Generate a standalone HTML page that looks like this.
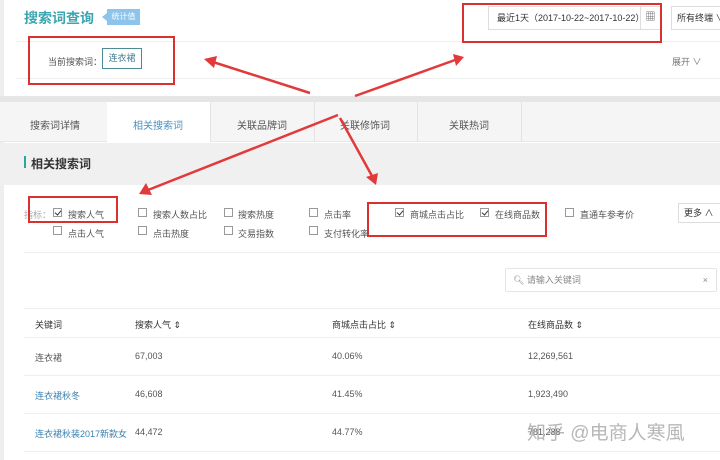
<!DOCTYPE html>
<html><head><meta charset="utf-8"><style>
*{margin:0;padding:0;box-sizing:border-box}
body{width:720px;height:460px;overflow:hidden;background:#fff;font-family:"Liberation Sans","Noto Sans CJK SC",sans-serif;font-size:9px;color:#555;position:relative}
.a{position:absolute;white-space:nowrap}
.cb{position:absolute;width:9px;height:9px;border:1px solid #999;background:#fff}
.cb.on::after{content:"";position:absolute;left:2px;top:0px;width:3px;height:5px;border:solid #333;border-width:0 1.5px 1.5px 0;transform:rotate(40deg)}
</style></head><body>
<div class="a" style="left:0;top:0;width:4px;height:460px;background:#eee"></div>
<div class="a" style="left:24px;top:8px;font-size:14px;font-weight:bold;color:#3aa6b0">搜索词查询</div>
<div class="a" style="left:107px;top:9px;width:33px;height:16px;background:#8cc4ec;color:#fff;font-size:8px;line-height:16px;text-align:center">统计值</div>
<div class="a" style="left:102px;top:13px;width:0;height:0;border:4px solid transparent;border-right:5px solid #8cc4ec;border-left:0"></div>
<div class="a" style="left:488px;top:6px;width:173px;height:24px;border:1px solid #ddd;line-height:22px;padding-left:8px;color:#333">最近1天（2017-10-22~2017-10-22）</div>
<div class="a" style="left:640px;top:6px;width:21px;height:24px;border:1px solid #ddd;text-align:center;line-height:22px;font-size:10px">▦</div>
<div class="a" style="left:671px;top:6px;width:50px;height:24px;border:1px solid #ddd;line-height:22px;padding-left:5px;color:#333">所有终端 ∨</div>
<div class="a" style="left:16px;top:41px;width:704px;height:1px;background:#eee"></div>
<div class="a" style="left:16px;top:78px;width:704px;height:1px;background:#eee"></div>
<div class="a" style="left:48px;top:55px">当前搜索词：</div>
<div class="a" style="left:102px;top:48px;width:40px;height:21px;border:1px solid #4c8b96;line-height:19px;text-align:center;color:#3a7a90">连衣裙</div>
<div class="a" style="left:672px;top:55px;color:#777">展开 ∨</div>
<div class="a" style="left:0;top:96px;width:720px;height:6px;background:#e6e6e6"></div>
<div class="a" style="left:0;top:102px;width:720px;height:40px;background:#f5f5f5;border-bottom:1px solid #e8e8e8"></div>
<div class="a" style="left:107px;top:102px;width:103px;height:41px;background:#fff"></div>
<div class="a" style="left:210px;top:102px;width:1px;height:40px;background:#e3e3e3"></div>
<div class="a" style="left:314px;top:102px;width:1px;height:40px;background:#e3e3e3"></div>
<div class="a" style="left:417px;top:102px;width:1px;height:40px;background:#e3e3e3"></div>
<div class="a" style="left:521px;top:102px;width:1px;height:40px;background:#e3e3e3"></div>
<div class="a" style="left:30px;top:117px;font-size:10px">搜索词详情</div>
<div class="a" style="left:133px;top:117px;font-size:10px;color:#4a90c0">相关搜索词</div>
<div class="a" style="left:237px;top:117px;font-size:10px">关联品牌词</div>
<div class="a" style="left:340px;top:117px;font-size:10px">关联修饰词</div>
<div class="a" style="left:449px;top:117px;font-size:10px">关联热词</div>
<div class="a" style="left:0;top:143px;width:720px;height:42px;background:#f0f0f0"></div>
<div class="a" style="left:24px;top:156px;width:2px;height:12px;background:#2aa5a0"></div>
<div class="a" style="left:31px;top:155px;font-size:12px;font-weight:bold;color:#333">相关搜索词</div>
<div class="a" style="left:24px;top:208px;color:#aaa">指标：</div>
<div class="cb on" style="left:53px;top:208px"></div><div class="a" style="left:68px;top:208px">搜索人气</div>
<div class="cb" style="left:53px;top:226px"></div><div class="a" style="left:68px;top:227px">点击人气</div>
<div class="cb" style="left:138px;top:208px"></div><div class="a" style="left:153px;top:208px">搜索人数占比</div>
<div class="cb" style="left:138px;top:226px"></div><div class="a" style="left:153px;top:227px">点击热度</div>
<div class="cb" style="left:224px;top:208px"></div><div class="a" style="left:238px;top:208px">搜索热度</div>
<div class="cb" style="left:224px;top:226px"></div><div class="a" style="left:238px;top:227px">交易指数</div>
<div class="cb" style="left:309px;top:208px"></div><div class="a" style="left:324px;top:208px">点击率</div>
<div class="cb" style="left:309px;top:226px"></div><div class="a" style="left:324px;top:227px">支付转化率</div>
<div class="cb on" style="left:395px;top:208px"></div><div class="a" style="left:410px;top:208px">商城点击占比</div>
<div class="cb on" style="left:480px;top:208px"></div><div class="a" style="left:495px;top:208px">在线商品数</div>
<div class="cb" style="left:565px;top:208px"></div><div class="a" style="left:580px;top:208px">直通车参考价</div>
<div class="a" style="left:678px;top:203px;width:44px;height:20px;border:1px solid #ddd;line-height:18px;padding-left:5px;color:#333">更多 ∧</div>
<div class="a" style="left:24px;top:252px;width:696px;height:1px;background:#eee"></div>
<div class="a" style="left:505px;top:268px;width:212px;height:24px;border:1px solid #e5e5e5;border-radius:2px;line-height:22px;padding-left:7px;color:#888">🔍︎ 请输入关键词<span style="position:absolute;right:8px">×</span></div>
<div class="a" style="left:24px;top:308px;width:696px;height:1px;background:#eee"></div>
<div class="a" style="left:24px;top:337px;width:696px;height:1px;background:#eee"></div>
<div class="a" style="left:24px;top:375px;width:696px;height:1px;background:#eee"></div>
<div class="a" style="left:24px;top:413px;width:696px;height:1px;background:#eee"></div>
<div class="a" style="left:24px;top:451px;width:696px;height:1px;background:#eee"></div>
<div class="a" style="left:35px;top:318px;color:#333">关键词</div>
<div class="a" style="left:135px;top:318px;color:#333">搜索人气 ⇕</div>
<div class="a" style="left:332px;top:318px;color:#333">商城点击占比 ⇕</div>
<div class="a" style="left:528px;top:318px;color:#333">在线商品数 ⇕</div>
<div class="a" style="left:35px;top:351px">连衣裙</div><div class="a" style="left:135px;top:351px">67,003</div><div class="a" style="left:332px;top:351px">40.06%</div><div class="a" style="left:528px;top:351px">12,269,561</div>
<div class="a" style="left:35px;top:389px;color:#3a80b0">连衣裙秋冬</div><div class="a" style="left:135px;top:389px">46,608</div><div class="a" style="left:332px;top:389px">41.45%</div><div class="a" style="left:528px;top:389px">1,923,490</div>
<div class="a" style="left:35px;top:427px;color:#3a80b0">连衣裙秋装2017新款女</div><div class="a" style="left:135px;top:427px">44,472</div><div class="a" style="left:332px;top:427px">44.77%</div><div class="a" style="left:528px;top:427px">781,288</div>
<div class="a" style="left:527px;top:418px;font-size:19px;color:rgba(170,170,170,.85)">知乎 @电商人寒風</div>
<svg class="a" style="left:0;top:0" width="720" height="460">
<g fill="none" stroke="#d93030" stroke-width="2">
<rect x="463" y="4" width="198" height="38"/>
<rect x="29" y="37" width="145" height="47"/>
<rect x="29" y="197" width="88" height="25"/>
<rect x="368" y="203" width="178" height="33"/>
</g>
<g stroke="#e23a3a" stroke-width="2.5">
<line x1="310" y1="93" x2="213" y2="62"/>
<line x1="355" y1="96" x2="455" y2="60"/>
<line x1="338" y1="115" x2="148" y2="190"/>
<line x1="340" y1="118" x2="372" y2="176"/>
</g>
<g fill="#e23a3a">
<polygon points="204,59 217,56 214,68"/>
<polygon points="464,57 453,54 456,66"/>
<polygon points="139,194 146,183 152,195"/>
<polygon points="376,185 366,177 378,173"/>
</g>
</svg>
</body></html>
